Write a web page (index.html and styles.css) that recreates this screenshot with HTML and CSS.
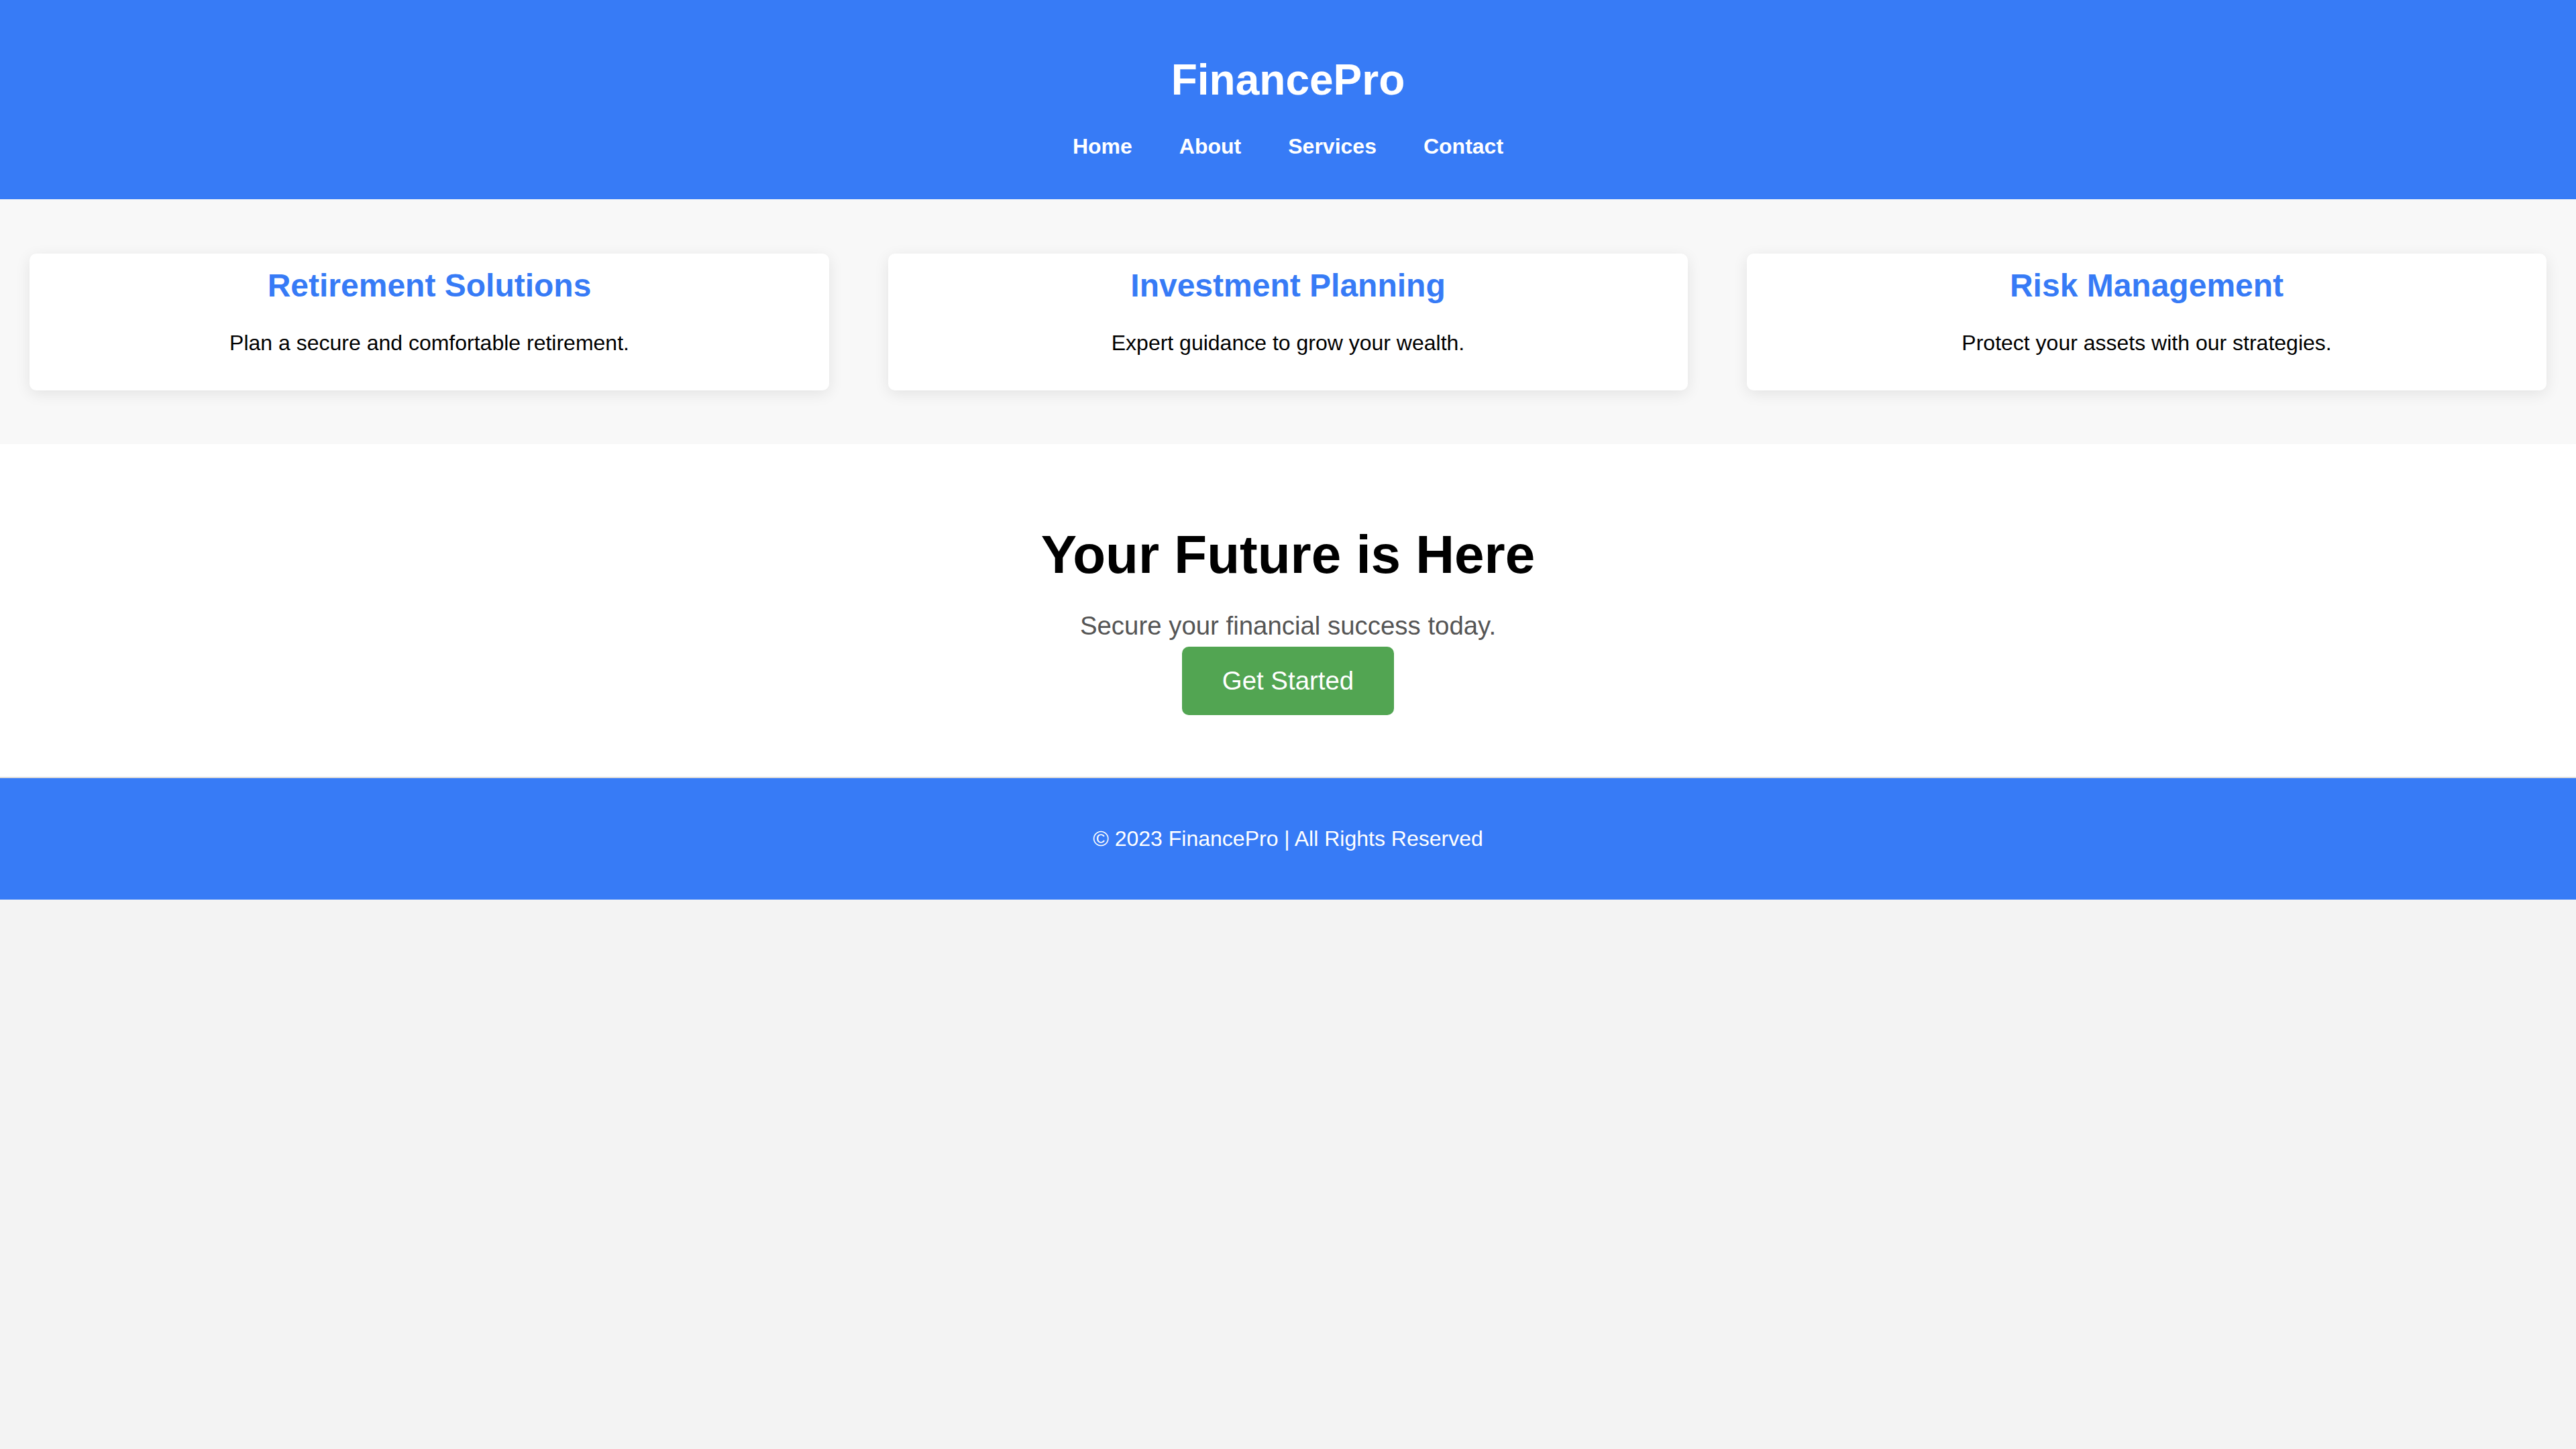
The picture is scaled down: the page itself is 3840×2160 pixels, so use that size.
FILE: index.html
```html
<!DOCTYPE html>
<html lang="en">
<head>
<meta charset="utf-8">
<title>FinancePro</title>
<link rel="stylesheet" href="styles.css">
</head>
<body>
<header class="site-header">
  <h1 class="brand">FinancePro</h1>
  <nav class="nav">
    <a href="#" class="nav-link">Home</a>
    <a href="#" class="nav-link">About</a>
    <a href="#" class="nav-link">Services</a>
    <a href="#" class="nav-link">Contact</a>
  </nav>
</header>
<section class="services">
  <div class="card">
    <h3 class="card-title">Retirement Solutions</h3>
    <p class="card-text">Plan a secure and comfortable retirement.</p>
  </div>
  <div class="card">
    <h3 class="card-title">Investment Planning</h3>
    <p class="card-text">Expert guidance to grow your wealth.</p>
  </div>
  <div class="card">
    <h3 class="card-title">Risk Management</h3>
    <p class="card-text">Protect your assets with our strategies.</p>
  </div>
</section>
<section class="hero">
  <h2 class="hero-title">Your Future is Here</h2>
  <p class="hero-text">Secure your financial success today.</p>
  <a href="#" class="cta">Get Started</a>
</section>
<footer class="site-footer">
  <p class="footer-text">© 2023 FinancePro | All Rights Reserved</p>
</footer>
</body>
</html>
```
FILE: styles.css
```css
html, body {
  margin: 0;
  padding: 0;
}
body {
  background: #f3f3f3;
  font-family: "Liberation Sans", Arial, Helvetica, sans-serif;
  color: #000;
}
.site-header {
  background: #377bf6;
  color: #fff;
  text-align: center;
  padding: 82px 0 60px;
}
.brand {
  margin: 0 0 44px;
  font-size: 64px;
  font-weight: bold;
  line-height: normal;
}
.nav {
  display: flex;
  justify-content: center;
  gap: 70px;
}
.nav-link {
  color: #fff;
  text-decoration: none;
  font-weight: bold;
  font-size: 32px;
  line-height: normal;
}
.services {
  background: #f8f8f8;
  display: flex;
  gap: 88px;
  padding: 81px 44px 80px;
}
.card {
  flex: 1;
  background: #fff;
  border-radius: 10px;
  box-shadow: 0 5px 22px rgba(0, 0, 0, 0.09);
  text-align: center;
  padding: 20px 40px 22px;
}
.card-title {
  margin: 0 0 40px;
  color: #377bf6;
  font-size: 48px;
  font-weight: bold;
  line-height: normal;
}
.card-text {
  margin: 0 0 30px;
  font-size: 32px;
  line-height: normal;
}
.hero {
  background: #fff;
  text-align: center;
  padding: 119px 0 92px;
  display: flex;
  flex-direction: column;
  align-items: center;
  border-bottom: 2px solid #dcdcdc;
}
.hero-title {
  margin: 0 0 38px;
  font-size: 80px;
  font-weight: bold;
  line-height: normal;
}
.hero-text {
  margin: 0 0 9px;
  font-size: 38.4px;
  color: #555;
  line-height: normal;
}
.cta {
  display: inline-block;
  background: #52a552;
  color: #fff;
  text-decoration: none;
  font-size: 38.4px;
  line-height: normal;
  padding: 29px 60px;
  border-radius: 10px;
}
.site-footer {
  background: #377bf6;
  color: #fff;
  text-align: center;
  padding: 72px 0;
}
.footer-text {
  margin: 0;
  font-size: 32px;
  line-height: normal;
}
```
